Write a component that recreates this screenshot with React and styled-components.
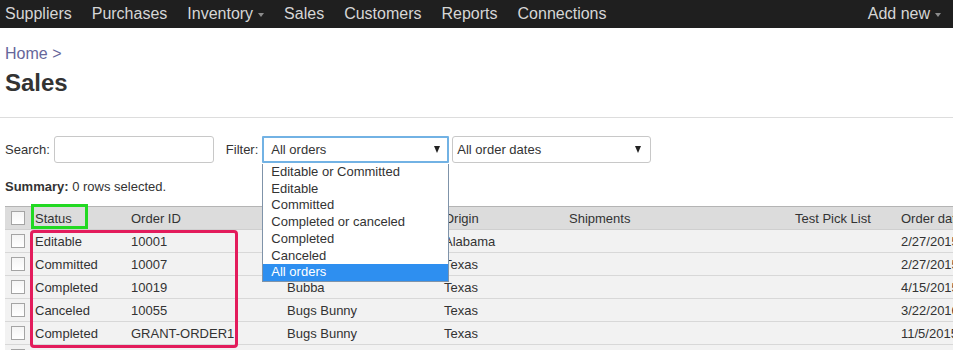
import React from 'react';
import styled, { createGlobalStyle } from 'styled-components';

const GlobalStyle = createGlobalStyle`
    html, body {
        margin: 0;
        padding: 0;
        background: #ffffff;
        overflow: hidden;
    }
    body {
        font-family: "Liberation Sans", Arial, sans-serif;
        color: #333333;
    }
`;

const Page = styled.div`
    width: 953px;
    height: 350px;
    overflow: hidden;
    position: relative;
`;

const NavBar = styled.nav`
    height: 28px;
    background: #1f1f1f;
    display: flex;
    align-items: center;
    padding: 0 12px 0 5px;
`;

const NavLinks = styled.div`
    display: flex;
    align-items: center;
    gap: 20px;
    flex: 1;
`;

const NavItem = styled.a`
    display: flex;
    align-items: center;
    font-size: 16px;
    line-height: 28px;
    color: #d6d6d6;
    text-decoration: none;
    cursor: pointer;
`;

const Caret = styled.span`
    display: inline-block;
    width: 0;
    height: 0;
    margin-left: 5px;
    margin-top: 2px;
    border-left: 3.5px solid transparent;
    border-right: 3.5px solid transparent;
    border-top: 4px solid #8c8c8c;
`;

const Content = styled.main`
    padding: 0 5px;
`;

const Breadcrumb = styled.div`
    margin-top: 17px;
    font-size: 16px;
    line-height: 18px;
    color: #66669a;
`;

const Title = styled.h1`
    margin: 6px 0 0;
    font-size: 24px;
    line-height: 28px;
    font-weight: bold;
    color: #333333;
`;

const Divider = styled.hr`
    margin: 20px -5px 0;
    border: 0;
    border-top: 1px solid #dddddd;
`;

const FilterRow = styled.div`
    margin-top: 18px;
    display: flex;
    align-items: center;
    height: 27px;
    font-size: 13px;
`;

const Label = styled.label`
    color: #333333;
    margin-right: ${(p) => p.gap}px;
    margin-left: ${(p) => p.offset || 0}px;
`;

const SearchInput = styled.input`
    box-sizing: border-box;
    width: 160px;
    height: 27px;
    border: 1px solid #c8c8c8;
    border-radius: 3px;
    outline: none;
    padding: 0 6px;
    font-family: inherit;
    font-size: 13px;
`;

const SelectWrap = styled.div`
    position: relative;
    margin-left: ${(p) => p.offset || 0}px;
`;

const SelectBox = styled.div`
    box-sizing: border-box;
    width: ${(p) => p.width}px;
    height: 27px;
    display: flex;
    align-items: center;
    justify-content: space-between;
    padding: 0 ${(p) => (p.focused ? 7 : 9)}px 0 ${(p) => (p.focused ? 7 : 4)}px;
    border: ${(p) => (p.focused ? '2px solid #72b2e4' : '1px solid #c8c8c8')};
    border-radius: ${(p) => (p.focused ? '1px' : '3px')};
    background: #ffffff;
    font-size: 13px;
    color: #333333;
`;

const Arrow = styled.span`
    width: 0;
    height: 0;
    border-left: 3.5px solid transparent;
    border-right: 3.5px solid transparent;
    border-top: 7px solid #222222;
`;

const OptionList = styled.ul`
    position: absolute;
    top: 28px;
    left: 0;
    z-index: 5;
    box-sizing: border-box;
    width: 187px;
    margin: 0;
    padding: 0;
    list-style: none;
    background: #ffffff;
    border: 1px solid #7f93a9;
    border-top: 0;
`;

const Option = styled.li`
    font-size: 13px;
    line-height: 16.7px;
    padding-left: 8px;
    color: ${(p) => (p.selected ? '#ffffff' : '#333333')};
    background: ${(p) => (p.selected ? '#2e8ff0' : 'transparent')};
`;

const Summary = styled.div`
    margin-top: 16px;
    font-size: 13px;
    line-height: 16px;
    color: #333333;

    strong {
        font-weight: bold;
    }
`;

const TableWrap = styled.div`
    position: relative;
    margin-top: 11px;
`;

const Table = styled.table`
    border-collapse: collapse;
    table-layout: fixed;
    width: 1012px;
    font-size: 13px;
    color: #333333;
`;

const HeadCell = styled.th`
    height: 22px;
    padding: 0 4px;
    text-align: left;
    font-weight: normal;
    background: #dcdcdc;
    border-top: 1px solid #b4b4b4;
    border-bottom: 1px solid #cfcfcf;
    white-space: nowrap;
    overflow: hidden;
`;

const Cell = styled.td`
    height: 22px;
    padding: 0 4px;
    background: #f2f2f2;
    border-bottom: 1px solid #d8d8d8;
    white-space: nowrap;
    overflow: hidden;
`;

const CheckBox = styled.span`
    display: block;
    box-sizing: border-box;
    width: 14px;
    height: 14px;
    margin-left: 2px;
    border: 1px solid #a4a4a4;
    background: linear-gradient(#f4f4f4, #ffffff);
`;

const Highlight = styled.div`
    position: absolute;
    box-sizing: border-box;
    left: ${(p) => p.x}px;
    top: ${(p) => p.y}px;
    width: ${(p) => p.w}px;
    height: ${(p) => p.h}px;
    border: 3px solid ${(p) => p.color};
    border-radius: ${(p) => p.radius || 0}px;
    pointer-events: none;
    z-index: 6;
`;

const navItems = [
    { name: 'Suppliers' },
    { name: 'Purchases' },
    { name: 'Inventory', caret: true },
    { name: 'Sales' },
    { name: 'Customers' },
    { name: 'Reports' },
    { name: 'Connections' },
];

const filterOptions = [
    'Editable or Committed',
    'Editable',
    'Committed',
    'Completed or canceled',
    'Completed',
    'Canceled',
    'All orders',
];

const columns = [
    { title: '', width: 26 },
    { title: 'Status', width: 96 },
    { title: 'Order ID', width: 156 },
    { title: 'Customer', width: 157 },
    { title: 'Origin', width: 125 },
    { title: 'Shipments', width: 226 },
    { title: 'Test Pick List', width: 106 },
    { title: 'Order date', width: 120 },
];

const orders = [
    { status: 'Editable', id: '10001', customer: 'Bubba', origin: 'Alabama', date: '2/27/2015' },
    { status: 'Committed', id: '10007', customer: 'Bubba', origin: 'Texas', date: '2/27/2015' },
    { status: 'Completed', id: '10019', customer: 'Bubba', origin: 'Texas', date: '4/15/2015' },
    { status: 'Canceled', id: '10055', customer: 'Bugs Bunny', origin: 'Texas', date: '3/22/2016' },
    { status: 'Completed', id: 'GRANT-ORDER1', customer: 'Bugs Bunny', origin: 'Texas', date: '11/5/2015' },
    { status: 'Editable', id: 'GRANT-ORDER2', customer: 'Bugs Bunny', origin: 'Texas', date: '11/6/2015' },
];

const App = () => {
    return (
        <Page>
            <GlobalStyle />
            <NavBar>
                <NavLinks>
                    {navItems.map((item) => (
                        <NavItem key={item.name}>
                            {item.name}
                            {item.caret && <Caret />}
                        </NavItem>
                    ))}
                </NavLinks>
                <NavItem>
                    Add new
                    <Caret />
                </NavItem>
            </NavBar>

            <Content>
                <Breadcrumb>Home &gt;</Breadcrumb>
                <Title>Sales</Title>
                <Divider />

                <FilterRow>
                    <Label gap={4}>Search:</Label>
                    <SearchInput type="text" />
                    <Label offset={12} gap={4}>Filter:</Label>
                    <SelectWrap>
                        <SelectBox width={187} focused>
                            <span>All orders</span>
                            <Arrow />
                        </SelectBox>
                        <OptionList>
                            {filterOptions.map((opt) => (
                                <Option key={opt} selected={opt === 'All orders'}>
                                    {opt}
                                </Option>
                            ))}
                        </OptionList>
                    </SelectWrap>
                    <SelectWrap offset={3}>
                        <SelectBox width={199}>
                            <span>All order dates</span>
                            <Arrow />
                        </SelectBox>
                    </SelectWrap>
                </FilterRow>

                <Summary>
                    <strong>Summary:</strong> 0 rows selected.
                </Summary>

                <TableWrap>
                    <Table>
                        <colgroup>
                            {columns.map((col, i) => (
                                <col key={i} style={{ width: col.width }} />
                            ))}
                        </colgroup>
                        <thead>
                            <tr>
                                {columns.map((col, i) => (
                                    <HeadCell key={i}>{i === 0 ? <CheckBox /> : col.title}</HeadCell>
                                ))}
                            </tr>
                        </thead>
                        <tbody>
                            {orders.map((o) => (
                                <tr key={o.id}>
                                    <Cell>
                                        <CheckBox />
                                    </Cell>
                                    <Cell>{o.status}</Cell>
                                    <Cell>{o.id}</Cell>
                                    <Cell>{o.customer}</Cell>
                                    <Cell>{o.origin}</Cell>
                                    <Cell />
                                    <Cell />
                                    <Cell>{o.date}</Cell>
                                </tr>
                            ))}
                        </tbody>
                    </Table>
                    <Highlight x={26} y={-2} w={57} h={25} color="#22d922" />
                    <Highlight x={25} y={24} w={208} h={118} color="#e31c5c" radius={4} />
                </TableWrap>
            </Content>
        </Page>
    );
};

export default App;
